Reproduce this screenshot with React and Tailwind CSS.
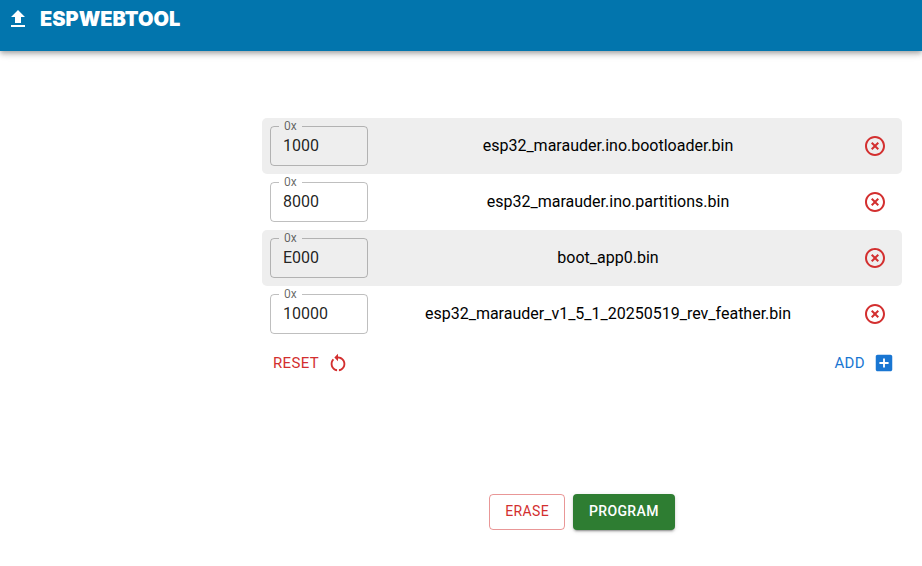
import { useState } from 'react';

const initialFiles = [
  { id: 1, offset: '1000', name: 'esp32_marauder.ino.bootloader.bin' },
  { id: 2, offset: '8000', name: 'esp32_marauder.ino.partitions.bin' },
  { id: 3, offset: 'E000', name: 'boot_app0.bin' },
  { id: 4, offset: '10000', name: 'esp32_marauder_v1_5_1_20250519_rev_feather.bin' },
];

function Icon({ className, children }) {
  return (
    <svg viewBox="0 0 24 24" fill="currentColor" aria-hidden="true" className={className}>
      {children}
    </svg>
  );
}

function Header() {
  return (
    <header className="flex h-[51px] items-start gap-[10px] bg-[#0275ad] px-[6px] pt-[7px] text-white shadow-[0_2px_4px_-1px_rgba(0,0,0,0.2),0_4px_5px_0_rgba(0,0,0,0.14),0_1px_10px_0_rgba(0,0,0,0.12)]">
      <Icon className="size-6">
        <path d="M5 20h14v-2H5v2zm0-10h4v6h6v-6h4l-7-7-7 7z" />
      </Icon>
      <h1 className="font-[Inter,sans-serif] text-[20px] leading-6 font-black">ESPWEBTOOL</h1>
    </header>
  );
}

function FileRow({ file, onChange, onRemove }) {
  const id = `offset-${file.id}`;
  return (
    <li className="flex h-14 items-center rounded-[5px] bg-white pr-[7px] pl-2 odd:bg-[#eeeeee]">
      <div className="relative w-[98px] shrink-0 bg-inherit">
        <input
          id={id}
          value={file.offset}
          onChange={(e) => onChange(e.target.value)}
          className="block h-10 w-full rounded border border-black/25 bg-transparent px-3 pb-[2px] text-base text-black/87 outline-none focus:border-[#1976d2]"
        />
        <label
          htmlFor={id}
          className="absolute -top-2 left-[9px] bg-inherit px-[5px] text-xs leading-4 text-black/60"
        >
          0x
        </label>
      </div>
      <span className="min-w-0 flex-1 text-center text-base text-black">{file.name}</span>
      <button
        type="button"
        aria-label={`Remove ${file.name}`}
        onClick={onRemove}
        className="ml-[7px] shrink-0 rounded-full p-2 text-[#d32f2f]"
      >
        <Icon className="size-6">
          <path d="M14.59 8L12 10.59 9.41 8 8 9.41 10.59 12 8 14.59 9.41 16 12 13.41 14.59 16 16 14.59 13.41 12 16 9.41 14.59 8zM12 2C6.47 2 2 6.47 2 12s4.47 10 10 10 10-4.47 10-10S17.53 2 12 2zm0 18c-4.41 0-8-3.59-8-8s3.59-8 8-8 8 3.59 8 8-3.59 8-8 8z" />
        </Icon>
      </button>
    </li>
  );
}

export default function App() {
  const [files, setFiles] = useState(initialFiles);

  const setOffset = (id, offset) =>
    setFiles(files.map((f) => (f.id === id ? { ...f, offset } : f)));
  const remove = (id) => setFiles(files.filter((f) => f.id !== id));
  const add = () =>
    setFiles([...files, { id: Date.now(), offset: '0', name: 'Select file' }]);

  return (
    <div className="bg-white font-[Roboto,sans-serif]">
      <Header />
      <main className="pt-[67px] pr-5 pb-9 pl-[262px]">
        <ul>
          {files.map((file) => (
            <FileRow
              key={file.id}
              file={file}
              onChange={(value) => setOffset(file.id, value)}
              onRemove={() => remove(file.id)}
            />
          ))}
        </ul>
        <div className="flex justify-between">
          <button
            type="button"
            onClick={() => setFiles(initialFiles)}
            className="flex h-[42px] items-center gap-2 pr-[7px] pl-[11px] text-[15px] tracking-wide text-[#d32f2f]"
          >
            RESET
            <Icon className="size-[22px]">
              <path d="M12 5V2L8 6l4 4V7c3.31 0 6 2.69 6 6 0 2.97-2.17 5.43-5 5.91v2.02c3.95-.49 7-3.85 7-7.93 0-4.42-3.58-8-8-8z" />
              <path d="M6 13c0-1.65.67-3.15 1.76-4.24L6.34 7.34C4.9 8.79 4 10.79 4 13c0 4.08 3.05 7.44 7 7.93v-2.02c-2.83-.48-5-2.94-5-5.91z" />
            </Icon>
          </button>
          <button
            type="button"
            onClick={add}
            className="flex h-[42px] items-center gap-2 pr-[7px] pl-[11px] text-[15px] tracking-wide text-[#1976d2]"
          >
            ADD
            <Icon className="size-[22px]">
              <path d="M19 3H5c-1.11 0-2 .9-2 2v14c0 1.1.89 2 2 2h14c1.1 0 2-.9 2-2V5c0-1.1-.9-2-2-2zm-2 10h-4v4h-2v-4H7v-2h4V7h2v4h4v2z" />
            </Icon>
          </button>
        </div>
        <div className="mt-[110px] flex justify-center gap-2">
          <button
            type="button"
            className="h-9 rounded border border-[#d32f2f]/50 px-[15px] pb-[2px] text-sm tracking-wide text-[#d32f2f]"
          >
            ERASE
          </button>
          <button
            type="button"
            className="h-9 rounded bg-[#2e7d32] px-4 pb-[2px] text-sm font-medium tracking-wide text-white shadow-[0_3px_1px_-2px_rgba(0,0,0,0.2),0_2px_2px_0_rgba(0,0,0,0.14),0_1px_5px_0_rgba(0,0,0,0.12)]"
          >
            PROGRAM
          </button>
        </div>
      </main>
    </div>
  );
}
